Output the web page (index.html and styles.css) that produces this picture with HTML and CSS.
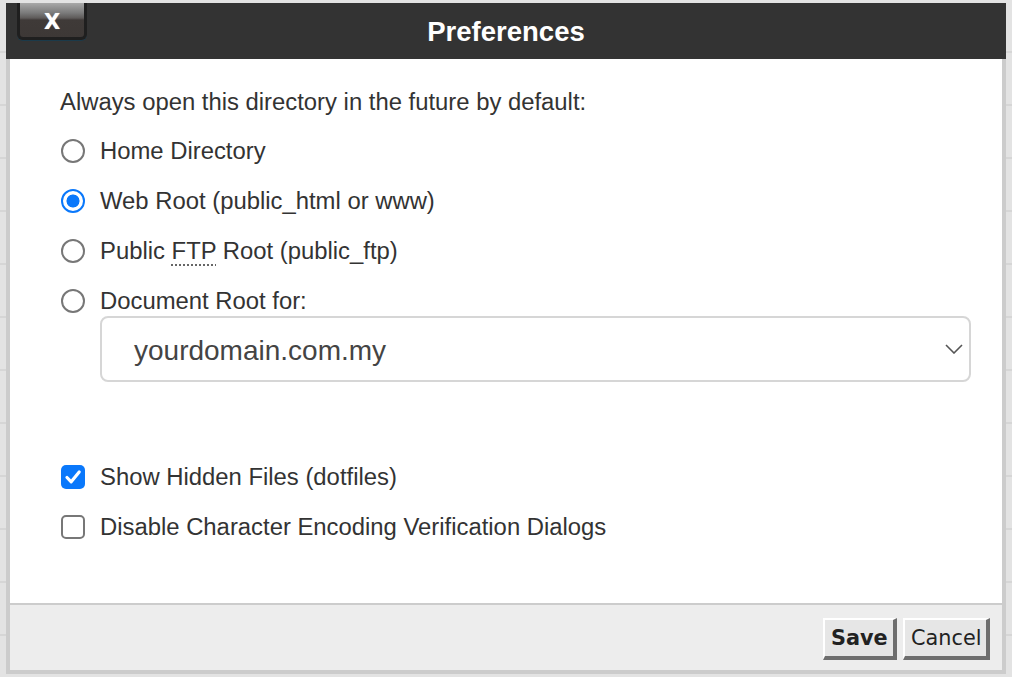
FILE: index.html
```html
<!DOCTYPE html>
<html>
<head>
<meta charset="utf-8">
<link rel="stylesheet" href="styles.css">
<title>Preferences</title>
</head>
<body>
<div class="backdrop"></div>
<div class="dialog">
  <div class="header">
    <button class="close" type="button" aria-label="Close">X</button>
    <h1 class="title">Preferences</h1>
  </div>
  <div class="content">
    <p class="lead">Always open this directory in the future by default:</p>
    <label class="row"><span class="radio"></span><span>Home Directory</span></label>
    <label class="row"><span class="radio checked"></span><span>Web Root (public_html or www)</span></label>
    <label class="row"><span class="radio"></span><span>Public <abbr class="abbr" title="File Transfer Protocol">FTP</abbr> Root (public_ftp)</span></label>
    <label class="row"><span class="radio"></span><span>Document Root for:</span></label>
    <div class="select">
      <span class="select-text">yourdomain.com.my</span>
      <svg class="chevron" width="18" height="10" viewBox="0 0 18 10"><path d="M1 1 L9 9 L17 1" fill="none" stroke="#555" stroke-width="1.6"/></svg>
    </div>
    <label class="row check-first"><span class="checkbox checked"><svg width="24" height="24" viewBox="0 0 24 24"><path d="M6 12.5 L10.2 16.8 L18.2 7" fill="none" stroke="#fff" stroke-width="3.2" stroke-linecap="round" stroke-linejoin="round"/></svg></span><span>Show Hidden Files (dotfiles)</span></label>
    <label class="row"><span class="checkbox"></span><span>Disable Character Encoding Verification Dialogs</span></label>
  </div>
  <div class="footer">
    <button class="btn btn-save" type="button">Save</button>
    <button class="btn" type="button">Cancel</button>
  </div>
</div>
</body>
</html>
```

FILE: styles.css
```css
html, body {
  margin: 0;
  padding: 0;
  width: 1012px;
  height: 677px;
  overflow: hidden;
}

body {
  background: #e3e3e3;
  font-family: "Liberation Sans", Arial, sans-serif;
}

.backdrop {
  height: 677px;
  background: repeating-linear-gradient(to bottom, #e3e3e3 0, #e3e3e3 51px, #d6d6d6 51px, #d6d6d6 53px);
}

.dialog {
  position: absolute;
  left: 6px;
  top: 3px;
  width: 1000px;
  height: 671px;
  display: flex;
  flex-direction: column;
  background: #ccc;
}

.header {
  position: relative;
  height: 56px;
  background: #333;
  display: flex;
  align-items: center;
  justify-content: center;
}

.title {
  margin: 0;
  color: #fff;
  font-size: 27.5px;
  font-weight: bold;
  line-height: 1;
  padding-top: 2px;
}

.close {
  position: absolute;
  left: 11px;
  top: 0;
  width: 70px;
  height: 37px;
  padding: 5px 0 0;
  border: 3px solid #1f1f1f;
  border-top: 0;
  border-radius: 0 0 6px 6px;
  background: linear-gradient(to bottom, #a8a8a8 0, #7a7a7a 10px, #5e5b5a 15px, #3f3a38 17px, #3d3836 100%);
  color: #fff;
  font-family: "DejaVu Sans", sans-serif;
  font-weight: bold;
  font-size: 21px;
  line-height: 1;
  text-shadow: 0 0 1px rgba(255, 255, 255, 0.6);
  box-shadow: 0 1px 0 #1b3a4a;
}

.content {
  flex: 1;
  margin: 0 4px;
  background: #fff;
  padding: 28px 31px 0 50px;
  color: #333;
  font-size: 23.85px;
  display: flex;
  flex-direction: column;
}

.lead {
  margin: 0 0 19px;
  height: 30px;
  line-height: 30px;
}

.row {
  display: flex;
  align-items: center;
  height: 30px;
  line-height: 30px;
  margin-bottom: 20px;
  gap: 15px;
}

.row:nth-of-type(4) {
  margin-bottom: 0;
}

.radio {
  flex: none;
  width: 24px;
  height: 24px;
  margin-left: 1px;
  box-sizing: border-box;
  border: 2px solid #777;
  border-radius: 50%;
  background: #fff;
}

.radio.checked {
  border-color: #0a78fb;
  background: radial-gradient(circle, #0a78fb 0, #0a78fb 6.2px, #fff 6.8px, #fff 100%);
}

.abbr {
  text-decoration: underline dotted 2px;
  text-decoration-color: #666;
  text-underline-offset: 5px;
}

.select {
  margin-left: 40px;
  width: 871px;
  height: 66px;
  box-sizing: border-box;
  border: 2px solid #d6d6d6;
  border-radius: 8px;
  display: flex;
  align-items: center;
  justify-content: space-between;
  padding: 0 6px 0 32px;
  font-size: 28px;
  color: #444;
}

.select-text {
  padding-top: 3px;
}

.check-first {
  margin-top: 80px;
}

.checkbox {
  flex: none;
  width: 24px;
  height: 24px;
  margin-left: 1px;
  box-sizing: border-box;
  border: 2px solid #777;
  border-radius: 5px;
  background: #fff;
  display: flex;
  align-items: center;
  justify-content: center;
}

.checkbox.checked {
  border: 0;
  background: #0a78fb;
}

.footer {
  margin: 2px 4px 4px;
  height: 65px;
  background: #ededed;
  display: flex;
  justify-content: flex-end;
  align-items: flex-start;
  padding: 13px 12px 0 0;
  box-sizing: border-box;
  gap: 6px;
}

.btn {
  height: 42px;
  box-sizing: border-box;
  padding: 0 6px;
  background: #e6e6e6;
  border-style: solid;
  border-width: 2px 4px 4px 2px;
  border-color: #fff #6e6e6e #6e6e6e #fff;
  font-family: "DejaVu Sans", sans-serif;
  font-size: 20.8px;
  color: #222;
  line-height: 1;
}

.btn-save {
  font-weight: bold;
  width: 74px;
}

.btn:not(.btn-save) {
  width: 87px;
}
```
